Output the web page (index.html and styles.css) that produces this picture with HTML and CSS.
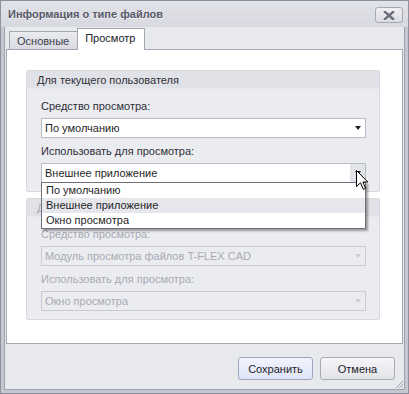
FILE: index.html
```html
<!DOCTYPE html>
<html lang="ru">
<head>
    <meta charset="UTF-8">
    <meta name="viewport" content="width=device-width, initial-scale=1.0">
    <title>Информация о типе файлов</title>
    <link rel="stylesheet" href="styles.css">
</head>
<body>

<div class="window">
    <div class="titlebar">
        <span class="title">Информация о типе файлов</span>
        <button class="close-btn">
            <svg width="12" height="9" viewBox="0 0 12 9">
                <path d="M2 1 L10 8 M10 1 L2 8" stroke="#6b6d78" stroke-width="2.4" stroke-linecap="square"/>
            </svg>
        </button>
    </div>

    <div class="frame">
        <div class="tabs">
            <div class="tab">Основные</div>
            <div class="tab active">Просмотр</div>
        </div>

        <div class="tab-panel">
            <div class="group">
                <div class="group-header">Для текущего пользователя</div>
                <div class="group-body">
                    <div class="field-label">Средство просмотра:</div>
                    <div class="combo">
                        <span class="combo-text">По умолчанию</span>
                        <span class="combo-arrow"></span>
                    </div>
                    <div class="field-label">Использовать для просмотра:</div>
                    <div class="combo open">
                        <span class="combo-text">Внешнее приложение</span>
                        <span class="combo-arrow hover"></span>
                        <div class="dropdown">
                            <div class="dropdown-item">По умолчанию</div>
                            <div class="dropdown-item selected">Внешнее приложение</div>
                            <div class="dropdown-item">Окно просмотра</div>
                        </div>
                    </div>
                </div>
            </div>

            <div class="group disabled">
                <div class="group-header">Для всех пользователей</div>
                <div class="group-body">
                    <div class="field-label">Средство просмотра:</div>
                    <div class="combo">
                        <span class="combo-text">Модуль просмотра файлов T-FLEX CAD</span>
                        <span class="combo-arrow"></span>
                    </div>
                    <div class="field-label">Использовать для просмотра:</div>
                    <div class="combo">
                        <span class="combo-text">Окно просмотра</span>
                        <span class="combo-arrow"></span>
                    </div>
                </div>
            </div>
        </div>

        <div class="footer">
            <button class="btn btn-primary">Сохранить</button>
            <button class="btn">Отмена</button>
        </div>

        <svg class="grip" width="9" height="9" viewBox="0 0 9 9">
            <path d="M8 1 L1 8 M8 4 L4 8 M8 7 L7 8" stroke="#9c9eaa" stroke-width="1"/>
        </svg>
    </div>

    <!-- mouse pointer over the open combo -->
    <svg class="cursor" width="13" height="21" viewBox="0 0 13 21">
        <path d="M0.5 0.5 L0.5 16.5 L4.5 12.8 L7.3 19.3 L9.6 18.3 L6.9 12 L11.8 12 Z" fill="#fff" stroke="#000" stroke-width="1" stroke-linejoin="miter"/>
    </svg>
</div>

</body>
</html>
```

FILE: styles.css
```css
body, html {
    margin: 0;
    padding: 0;
    font-family: "Liberation Sans", Arial, sans-serif;
    font-size: 11px;
    color: #262630;
}

.window {
    position: relative;
    width: 409px;
    height: 394px;
    box-sizing: border-box;
    border: 1px solid #8f919d;
    background-color: #c5c7d1;
    display: flex;
    flex-direction: column;
}

.titlebar {
    flex-shrink: 0;
    height: 26px;
    display: flex;
    align-items: center;
    justify-content: space-between;
    padding: 0 5px 0 7px;
    background: linear-gradient(#e2e3e8, #d8d9e0);
}

.title {
    font-weight: bold;
    font-size: 11px;
    color: #575968;
    text-shadow: 0 1px 0 #f2f2f5;
}

.close-btn {
    width: 28px;
    height: 16px;
    padding: 0;
    margin-top: 2px;
    border: 1px solid #a7a9b4;
    border-radius: 3px;
    background: linear-gradient(#f0f0f3, #dcdde3);
    display: flex;
    align-items: center;
    justify-content: center;
}

.frame {
    position: relative;
    flex: 1;
    margin: 0 3px 3px;
    border: 1px solid #9fa1ad;
    border-top: none;
    background-color: #e8e9ed;
    display: flex;
    flex-direction: column;
}

.tabs {
    flex-shrink: 0;
    display: flex;
    align-items: flex-end;
    height: 22px;
    padding-left: 4px;
}

.tab {
    height: 17px;
    padding: 0 8px 0 7px;
    border: 1px solid #a4a6b1;
    border-bottom: none;
    background: linear-gradient(#ebecf0, #d9dae1);
    line-height: 18px;
    color: #3d3e4c;
}

.tab.active {
    height: 21px;
    margin-bottom: -1px;
    margin-left: -1px;
    padding: 0 9px 0 7px;
    background: #fff;
    line-height: 18px;
    color: #22222c;
    position: relative;
    z-index: 1;
}

.tab-panel {
    flex-shrink: 0;
    height: 273px;
    margin: 0 1px;
    padding: 20px 0 0 19px;
    border: 1px solid #a4a6b1;
    background-color: #fff;
}

.group {
    width: 352px;
    border: 1px solid #d8d9df;
    border-radius: 2px;
    background-color: #ebecf0;
}

.group + .group {
    margin-top: 6px;
}

.group-header {
    height: 17px;
    padding-left: 10px;
    line-height: 18px;
    background-color: #e1e2e7;
    border-bottom: 1px solid #e6e7eb;
    color: #30303a;
}

.group-body {
    padding: 10px 13px 8px 14px;
}

.field-label {
    line-height: 15px;
    margin-bottom: 4px;
    color: #2e2e38;
}

.combo + .field-label {
    margin-top: 6px;
}

.combo {
    position: relative;
    height: 18px;
    border: 1px solid #b9bbc5;
    background-color: #fff;
    display: flex;
    align-items: center;
    justify-content: space-between;
}

.combo-text {
    padding-left: 3px;
    color: #1f1f28;
}

.combo-arrow {
    width: 15px;
    height: 18px;
    display: flex;
    align-items: center;
    justify-content: center;
}

.combo-arrow::after {
    content: "";
    border-left: 3.5px solid transparent;
    border-right: 3.5px solid transparent;
    border-top: 4px solid #1f1f28;
}

.combo-arrow.hover {
    background-color: #e3e4e9;
}

.dropdown {
    position: absolute;
    top: 18px;
    left: -1px;
    right: -1px;
    border: 1px solid #6f7078;
    background-color: #fff;
    box-shadow: 2px 2px 2px rgba(0, 0, 0, 0.35);
    z-index: 2;
}

.dropdown-item {
    height: 15px;
    line-height: 15px;
    padding-left: 4px;
    color: #1f1f28;
}

.dropdown-item.selected {
    background-color: #e6e7ec;
}

.group.disabled .group-header,
.group.disabled .field-label,
.group.disabled .combo-text {
    color: #a9aab3;
}

.group.disabled .combo {
    background-color: #ebecf0;
    border-color: #c9cad2;
}

.group.disabled .combo-arrow::after {
    border-top-color: #cdced5;
}

.footer {
    flex: 1;
    display: flex;
    justify-content: flex-end;
    align-items: flex-start;
    gap: 7px;
    padding: 13px 9px 0 0;
}

.btn {
    width: 75px;
    height: 23px;
    padding: 0;
    border: 1px solid #a9abb6;
    border-radius: 3px;
    background: linear-gradient(#f6f6f8, #e2e3e8);
    font-family: "Liberation Sans", Arial, sans-serif;
    font-size: 11px;
    color: #22222c;
}

.btn-primary {
    border-color: #9da5c2;
    background: linear-gradient(#f2f4fc, #dfe4f5);
}

.grip {
    position: absolute;
    right: 0;
    bottom: 0;
}

.cursor {
    position: absolute;
    left: 355px;
    top: 169px;
    z-index: 5;
}
```
